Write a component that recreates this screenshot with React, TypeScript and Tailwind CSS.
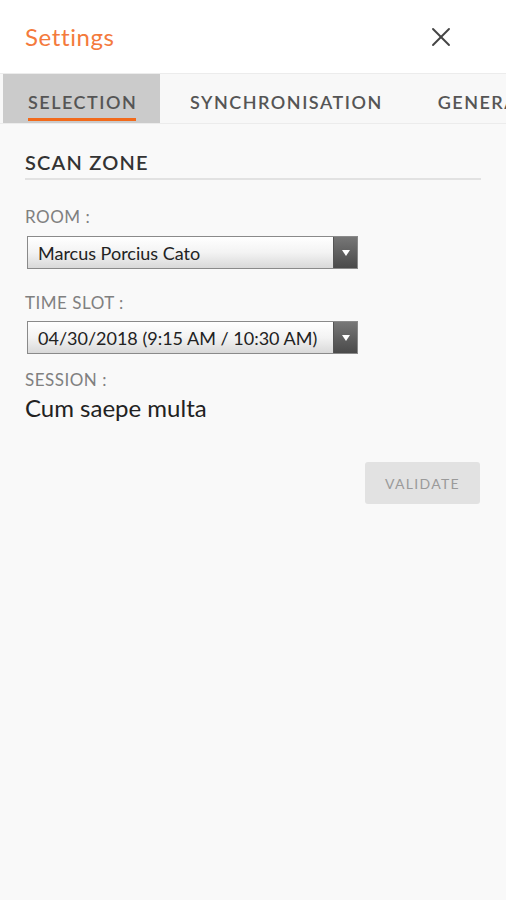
import { X } from 'lucide-react';

function Select({ value }: { value: string }) {
  return (
    <div className="flex h-[33px] w-[331px] border border-[#8a8a8a] bg-gradient-to-b from-[#ffffff] via-[#f3f3f3] to-[#d9d9d9]">
      <div className="flex flex-1 items-center pl-[10px] text-[18px] leading-[20px] text-[#222]">{value}</div>
      <div className="flex w-[24px] items-center justify-center border-l border-[#555] bg-gradient-to-b from-[#777] to-[#4a4a4a]">
        <svg width="8" height="6" viewBox="0 0 8 6">
          <path d="M0 0 H8 L4 6 Z" fill="#fff" />
        </svg>
      </div>
    </div>
  );
}

export default function App() {
  return (
    <div className="flex min-h-[900px] flex-col bg-[#f9f9f9] font-['Lato','Noto_Sans',sans-serif]">
      <header className="flex h-[73px] items-center justify-between bg-white pl-[25px] pr-[49px]">
        <span className="text-[24px] leading-[30px] tracking-[0.6px] text-[#f47a3c]">Settings</span>
        <X className="h-[32px] w-[32px] text-[#444]" strokeWidth={1.4} />
      </header>

      <nav className="flex h-[51px] overflow-hidden border-t border-b border-[#ececec] bg-[#f8f8f8] pl-[3px]">
        <div className="relative flex w-[157px] shrink-0 items-center bg-[#cbcbcb] pl-[25px] pt-[7px]">
          <span className="text-[18px] leading-[22px] font-semibold tracking-[1.5px] text-[#555]">SELECTION</span>
          <span className="absolute bottom-[2px] left-[25px] h-[3px] w-[108px] bg-[#f26a1b]" />
        </div>
        <div className="flex shrink-0 items-center pl-[30px] pt-[7px]">
          <span className="whitespace-nowrap text-[18px] leading-[22px] font-semibold tracking-[1.5px] text-[#555]">SYNCHRONISATION</span>
        </div>
        <div className="flex shrink-0 items-center pl-[55px] pt-[7px]">
          <span className="whitespace-nowrap text-[18px] leading-[22px] font-semibold tracking-[1.5px] text-[#555]">GENERAL</span>
        </div>
      </nav>

      <main className="flex flex-col px-[25px] pt-[26px]">
        <div className="border-b-2 border-[#e2e2e2] pb-[4px] text-[20px] leading-[24px] font-semibold tracking-[1.2px] text-[#333]">
          SCAN ZONE
        </div>

        <div className="mt-[27px] text-[17px] leading-[20px] tracking-[0.5px] text-[#808080]">ROOM :</div>
        <div className="mt-[9px] pl-[2px]">
          <Select value="Marcus Porcius Cato" />
        </div>

        <div className="mt-[24px] text-[17px] leading-[20px] tracking-[0.5px] text-[#808080]">TIME SLOT :</div>
        <div className="mt-[8px] pl-[2px]">
          <Select value="04/30/2018 (9:15 AM / 10:30 AM)" />
        </div>

        <div className="mt-[16px] text-[17px] leading-[20px] tracking-[0.5px] text-[#808080]">SESSION :</div>
        <div className="mt-[4px] text-[24px] leading-[28px] text-[#222]">Cum saepe multa</div>

        <div className="mt-[40px] flex justify-end pr-[1px]">
          <button
            type="button"
            className="h-[42px] w-[115px] rounded-[3px] bg-[#e2e2e2] text-[14px] tracking-[1.3px] text-[#9a9a9a]"
          >
            VALIDATE
          </button>
        </div>
      </main>
    </div>
  );
}
